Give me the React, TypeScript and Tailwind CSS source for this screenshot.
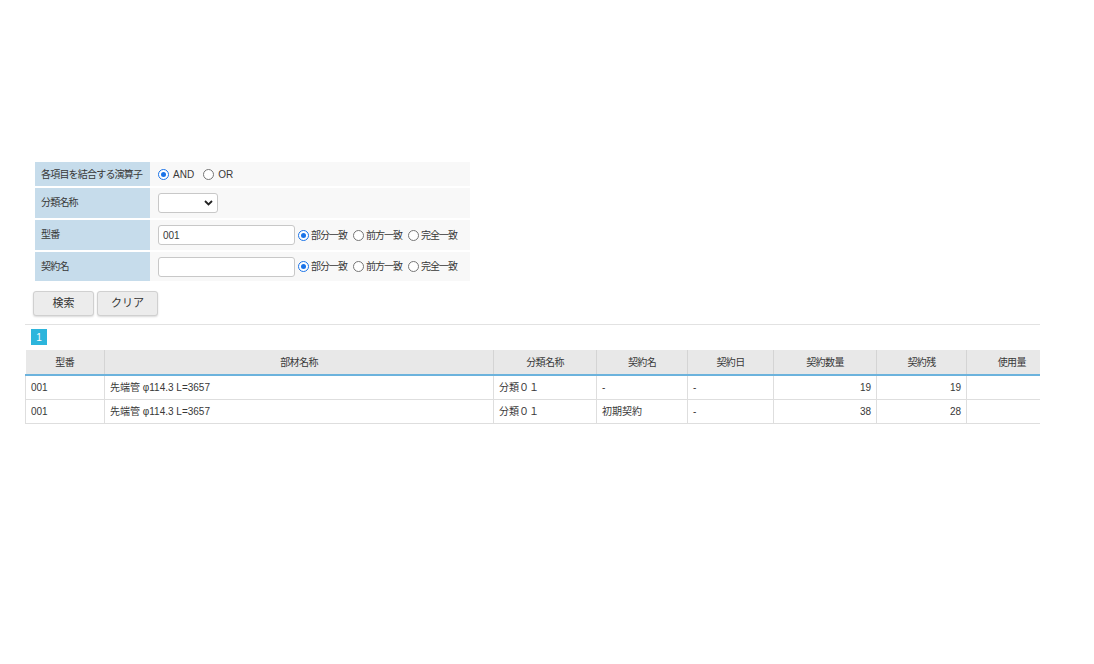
import React from 'react';

const font = { fontFamily: '"Liberation Sans", "Noto Sans CJK JP", sans-serif' };

function Radio({ checked }: { checked?: boolean }) {
  return (
    <span
      className={`relative inline-block h-[11px] w-[11px] shrink-0 rounded-full border bg-white ${
        checked ? 'border-[#1a73e8]' : 'border-[#767676]'
      }`}
    >
      {checked && <span className="absolute left-[2px] top-[2px] h-[5px] w-[5px] rounded-full bg-[#1a73e8]" />}
    </span>
  );
}

function MatchRadios() {
  return (
    <div className="flex shrink-0 items-center gap-[2px] whitespace-nowrap tracking-[-1px]">
      <Radio checked />
      <span>部分一致</span>
      <span className="w-[2px]" />
      <Radio />
      <span>前方一致</span>
      <span className="w-[2px]" />
      <Radio />
      <span>完全一致</span>
    </div>
  );
}

const cols = [
  { label: '型番', w: 79 },
  { label: '部材名称', w: 389 },
  { label: '分類名称', w: 103 },
  { label: '契約名', w: 91 },
  { label: '契約日', w: 86 },
  { label: '契約数量', w: 103 },
  { label: '契約残', w: 90 },
  { label: '使用量', w: 90 },
];

const rows = [
  ['001', '先端管 φ114.3 L=3657', '分類０１', '-', '-', '19', '19', ''],
  ['001', '先端管 φ114.3 L=3657', '分類０１', '初期契約', '-', '38', '28', ''],
];

export default function App() {
  return (
    <div className="min-h-[664px] w-[1094px] bg-white text-[10px] text-[#383838]" style={font}>
      <div className="pl-[25px] pt-[162px]">
        {/* search form */}
        <div className="ml-[10px] flex w-[435px] flex-col gap-[2px]">
          <div className="flex h-[24px]">
            <div className="flex w-[115px] shrink-0 items-center whitespace-nowrap bg-[#c6dceb] px-[6px] tracking-[-0.8px]">各項目を結合する演算子</div>
            <div className="flex flex-1 items-center gap-[4px] bg-[#f8f8f8] px-[8px]">
              <Radio checked />
              <span>AND</span>
              <span className="w-[1px]" />
              <Radio />
              <span>OR</span>
            </div>
          </div>
          <div className="flex h-[30px]">
            <div className="w-[115px] shrink-0 bg-[#c6dceb] px-[6px] pt-[7px] tracking-[-0.8px]">分類名称</div>
            <div className="flex flex-1 items-center bg-[#f8f8f8] px-[8px]">
              <div className="flex h-[20px] w-[60px] items-center justify-end rounded-[3px] border border-[#c8c8c8] bg-white pr-[4px]">
                <svg width="9" height="6" viewBox="0 0 9 6">
                  <path d="M1 1l3.5 3.5L8 1" fill="none" stroke="#222" strokeWidth="1.8" />
                </svg>
              </div>
            </div>
          </div>
          <div className="flex h-[30px]">
            <div className="w-[115px] shrink-0 bg-[#c6dceb] px-[6px] pt-[7px] tracking-[-0.8px]">型番</div>
            <div className="flex flex-1 items-center gap-[3px] overflow-hidden bg-[#f8f8f8] pl-[8px]">
              <div className="flex h-[20px] w-[137px] shrink-0 items-center rounded-[3px] border border-[#c8c8c8] bg-white px-[4px]">001</div>
              <MatchRadios />
            </div>
          </div>
          <div className="flex h-[29px]">
            <div className="w-[115px] shrink-0 bg-[#c6dceb] px-[6px] pt-[7px] tracking-[-0.8px]">契約名</div>
            <div className="flex flex-1 items-center gap-[3px] overflow-hidden bg-[#f8f8f8] pl-[8px]">
              <div className="h-[20px] w-[137px] shrink-0 rounded-[3px] border border-[#c8c8c8] bg-white" />
              <MatchRadios />
            </div>
          </div>
        </div>

        {/* buttons */}
        <div className="ml-[8px] mt-[10px] flex gap-[3px]">
          <button className="h-[25px] w-[61px] rounded-[3px] border border-[#d0d0d0] bg-[#ececec] text-[11px] text-[#333] shadow-[0_1px_2px_rgba(0,0,0,0.15)]">
            検索
          </button>
          <button className="h-[25px] w-[61px] rounded-[3px] border border-[#d0d0d0] bg-[#ececec] text-[11px] text-[#333] shadow-[0_1px_2px_rgba(0,0,0,0.15)]">
            クリア
          </button>
        </div>

        <div className="mt-[8px] h-[1px] w-[1015px] bg-[#e2e2e2]" />

        {/* pager */}
        <div className="ml-[6px] mt-[4px] flex h-[16px] w-[16px] items-center justify-center bg-[#2cb5dc] text-[10px] text-white">
          1
        </div>

        {/* result table */}
        <div className="mt-[5px] w-[1015px] overflow-hidden">
          <table className="table-fixed border-collapse" style={{ width: 1031 }}>
            <colgroup>
              {cols.map(c => (
                <col key={c.label} style={{ width: c.w }} />
              ))}
            </colgroup>
            <thead>
              <tr className="h-[25px] border-b-2 border-[#6cb3dd] bg-[#e8e8e8]">
                {cols.map((c, i) => (
                  <th
                    key={c.label}
                    className={`px-[6px] text-center font-normal tracking-[-0.6px] ${i > 0 ? 'border-l border-[#d4d4d4]' : ''}`}
                  >
                    {c.label}
                  </th>
                ))}
              </tr>
            </thead>
            <tbody>
              {rows.map((r, ri) => (
                <tr key={ri} className="h-[24px] border-b border-[#dedede]">
                  {r.map((v, i) => (
                    <td
                      key={i}
                      className={`whitespace-nowrap border-l border-[#dedede] px-[5px] ${
                        i >= 5 ? 'text-right' : 'text-left'
                      }`}
                    >
                      {v}
                    </td>
                  ))}
                </tr>
              ))}
            </tbody>
          </table>
        </div>
      </div>
    </div>
  );
}
